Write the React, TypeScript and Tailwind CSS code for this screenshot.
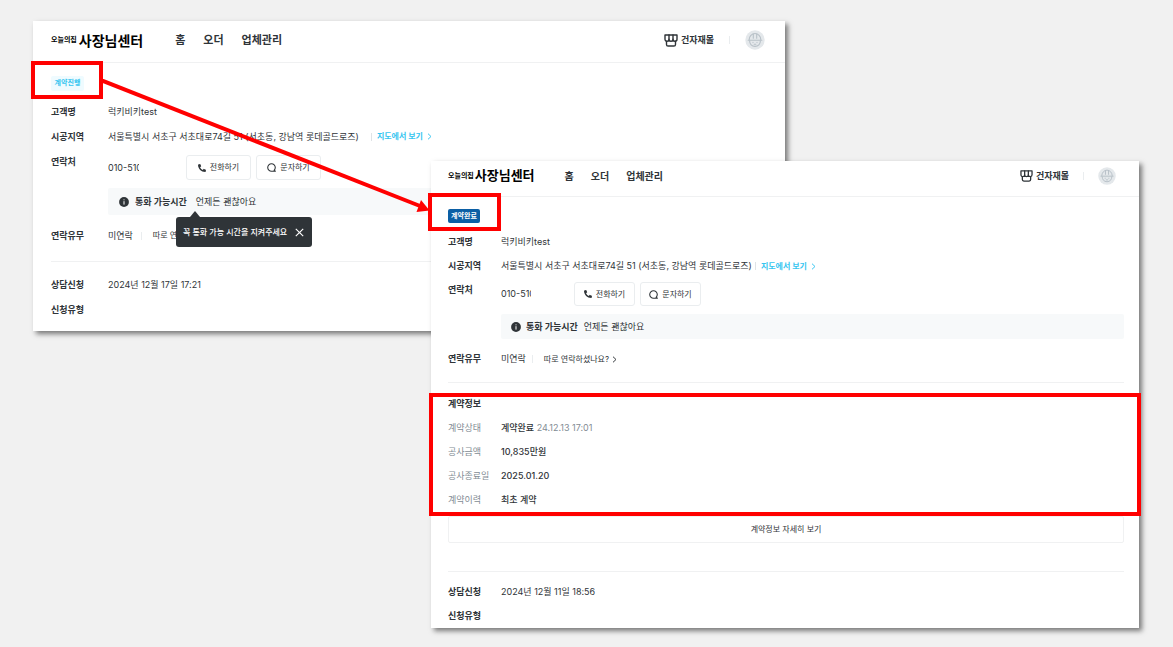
import React from "react";
import { FaPhoneAlt } from "react-icons/fa";

type Size = "large" | "small";

function StoreIcon({ className }: { className: string }) {
  return (
    <svg viewBox="0 0 14 13" className={className} fill="none" stroke="#2f3438" strokeWidth="1.4" strokeLinejoin="round" strokeLinecap="round" aria-hidden="true">
      <path d="M1 1h12v4.200c0 1.200-.8 2-2 2s-2-.8-2-2c0 1.200-.8 2-2 2s-2-.8-2-2c0 1.200-.8 2-2 2s-2-.8-2-2z" />
      <path d="M5 1v4.200M9 1v4.200M2.500 7.200v3.200c0 1 .6 1.600 1.600 1.600h5.800c1 0 1.600-.6 1.600-1.600V7.200" />
    </svg>
  );
}

function Avatar({ className }: { className: string }) {
  return (
    <svg viewBox="0 0 20 20" className={className} role="img" aria-label="프로필">
      <circle cx="10" cy="10" r="9.700" fill="#e4e8eb" />
      <g fill="none" stroke="#b8c1c8" strokeWidth="1.100" strokeLinecap="round">
        <path d="M4.200 9.500a5.800 6 0 0 1 11.600 0M3.200 10.200h13.600" />
        <path d="M8.300 4v4.200M11.700 4v4.200" />
        <path d="M4.600 10.800c0 3.200 2.200 5.600 5.400 5.600s5.400-2.400 5.400-5.600" />
        <path d="M8 12.400v.2M12 12.400v.2M9.200 14.300h1.600" />
      </g>
    </svg>
  );
}

function MessageIcon() {
  return (
    <svg viewBox="0 0 10 10" className="size-[9px]" fill="none" stroke="#2f3438" strokeWidth="1.200" strokeLinejoin="round" aria-hidden="true">
      <path d="M9.300 9.200H5A4.200 4.200 0 1 1 9.200 5c0 1.300-.5 2.300-1.300 3.100z" />
    </svg>
  );
}

function InfoIcon() {
  return (
    <svg viewBox="0 0 10 10" className="size-[10px]" aria-hidden="true">
      <circle cx="5" cy="5" r="4.900" fill="#2f3438" />
      <path d="M5 2.400v.9M5 4.200v3.400" stroke="#fff" strokeWidth="1" />
    </svg>
  );
}

function Chevron() {
  return (
    <svg viewBox="0 0 5 8" className="h-[7px] w-[5px]" fill="none" stroke="currentColor" strokeWidth="1.100" aria-hidden="true">
      <path d="M.8.8 4.200 4 .8 7.200" />
    </svg>
  );
}

function Header({ size }: { size: Size }) {
  const large = size === "large";
  return (
    <header
      className={`flex items-center whitespace-nowrap border-b border-[#f0f1f2] font-bold ${large ? "h-[42px] pb-[3px] pl-[18px] pr-5" : "h-9 pb-[5px] pl-[17px] pr-[23px]"}`}
    >
      <a href="#home" className={`flex items-center text-black ${large ? "gap-0.5" : "gap-px"}`}>
        <span className="text-[7px]">오늘의집</span>
        <span className={large ? "text-[14px]" : "text-[13px]"}>사장님센터</span>
      </a>
      <nav className={`flex ${large ? "ml-8 gap-[18px] text-[11px]" : "ml-[30px] gap-[17px] text-[10px]"}`}>
        <a href="#home">홈</a>
        <a href="#order">오더</a>
        <a href="#company">업체관리</a>
      </nav>
      <a href="#mall" className="ml-auto flex items-center gap-[3px] text-[9px]">
        <StoreIcon className={large ? "h-[13px] w-[14px]" : "h-3 w-[13px]"} />
        건자재몰
      </a>
      <span className={`h-2 w-px bg-[#eaedef] ${large ? "mx-[15px]" : "mx-[14px]"}`} />
      <Avatar className={large ? "size-5" : "size-[18px]"} />
    </header>
  );
}

function Row({ size, label, muted = false, children }: { size: Size; label: string; muted?: boolean; children?: React.ReactNode }) {
  return (
    <div className={size === "large" ? "grid grid-cols-[57px_1fr] leading-[25px]" : "grid grid-cols-[53px_1fr] leading-6"}>
      <dt className={muted ? "text-[#828c94]" : "font-bold"}>{label}</dt>
      <dd className="min-w-0">{children}</dd>
    </div>
  );
}

function CustomerRows({ size, tooltip }: { size: Size; tooltip?: React.ReactNode }) {
  const large = size === "large";
  const button = `flex items-center justify-center gap-1 rounded-[3px] border border-[#eaedef] bg-white text-[8px] ${large ? "h-[25px] w-[65px]" : "h-6 w-[61px]"}`;
  return (
    <dl className={large ? "mt-2" : "mt-[7px]"}>
      <Row size={size} label="고객명">럭키비키test</Row>
      <Row size={size} label="시공지역">
        <span className="flex items-center">
          서울특별시 서초구 서초대로74길 51 (서초동, 강남역 롯데골드로즈)
          <span className={`mr-[5px] h-2 w-px bg-[#dfe3e6] ${large ? "ml-3" : "ml-[3px]"}`} />
          <a href="#map" className="flex items-center gap-1 text-[8px] font-bold text-[#35c5f0]">
            지도에서 보기
            <Chevron />
          </a>
        </span>
      </Row>
      <Row size={size} label="연락처">
        <div className={large ? "pt-1.5" : "pt-1"}>
          <div className="flex items-center gap-[5px]">
            <span className={large ? "w-[73px]" : "w-[68px]"}>
              <span className={`block overflow-hidden ${large ? "w-[31px]" : "w-[30px]"}`}>010-510</span>
            </span>
            <button type="button" className={button}>
              <FaPhoneAlt className="size-2" />
              전화하기
            </button>
            <button type="button" className={button}>
              <MessageIcon />
              문자하기
            </button>
          </div>
          <div className={`relative mt-2 flex items-center rounded-[2px] bg-[#f7f9fa] ${large ? "h-[27px] pl-[11px]" : "h-[25px] pl-2.5"}`}>
            <InfoIcon />
            <b className={large ? "ml-1.5" : "ml-[5px]"}>통화 가능시간</b>
            <span className={large ? "ml-[9px]" : "ml-1.5"}>언제든 괜찮아요</span>
            {tooltip}
          </div>
        </div>
      </Row>
      <div className="mt-2">
        <Row size={size} label="연락유무">
          <span className="flex items-center">
            미연락
            <span className={`h-2 w-px bg-[#eaedef] ${large ? "ml-2 mr-[11px]" : "ml-1.5 mr-[11px]"}`} />
            <a href="#contact" className="flex items-center gap-[3px] text-[8px]">
              따로 연락하셨나요?
              <Chevron />
            </a>
          </span>
        </Row>
      </div>
    </dl>
  );
}

function CallTooltip() {
  return (
    <div role="tooltip" className="absolute left-[68px] top-[29px] flex h-[30px] w-[136px] items-center justify-between rounded-[3px] bg-[#2f3438] pl-[7px] pr-2 text-[8px] font-medium text-white">
      <svg viewBox="0 0 10 6" className="absolute -top-[6px] left-[14px] h-[6px] w-[10px]" aria-hidden="true">
        <path d="M5 0l5 6H0z" fill="#2f3438" />
      </svg>
      꼭 통화 가능 시간을 지켜주세요
      <button type="button" aria-label="닫기">
        <svg viewBox="0 0 8 8" className="size-[9px]" stroke="#fff" strokeWidth="1" aria-hidden="true">
          <path d="M.7.7l6.600 6.600M7.300.7L.7 7.300" />
        </svg>
      </button>
    </div>
  );
}

const panel = "relative col-start-1 row-start-1 self-start bg-white shadow-[3px_3px_5px_rgba(0,0,0,0.5)]";

function ProgressPanel() {
  return (
    <section className={`${panel} ml-[33px] mr-[388px] mt-[21px]`}>
      <Header size="large" />
      <div className="pb-[9px] pl-[18px] pr-[15px]">
        <div className="relative mt-[13px] w-fit">
          <span className="flex h-[15px] w-[33px] items-center justify-center rounded-[2px] bg-[#effbff] text-[7px] font-bold text-[#35c5f0]">
            계약진행
          </span>
          <span className="absolute -left-5 -top-[15px] h-[38px] w-[72px] border-4 border-[#ff0000]" />
        </div>
        <CustomerRows size="large" tooltip={<CallTooltip />} />
        <hr className="mt-[13px] border-[#f0f1f2]" />
        <dl className="mt-[10px]">
          <Row size="large" label="상담신청">2024년 12월 17일 17:21</Row>
          <Row size="large" label="신청유형" />
        </dl>
      </div>
    </section>
  );
}

function CompletePanel() {
  return (
    <section className={`${panel} mb-[19px] ml-[431px] mr-[34px] mt-[161px]`}>
      <Header size="small" />
      <div className="pl-[17px] pr-[15px]">
        <div className="relative mt-3 w-fit">
          <span className="flex h-[14px] w-8 items-center justify-center rounded-[2px] bg-[#0b5fa5] text-[7px] font-bold text-white">
            계약완료
          </span>
          <span className="absolute -left-5 -top-4 h-[38px] w-[73px] border-4 border-[#ff0000]" />
        </div>
        <CustomerRows size="small" />
        <hr className="mt-[11px] border-[#f0f1f2]" />
        <div className="relative mt-[9px]">
          <h2 className="font-bold leading-6">계약정보</h2>
          <dl>
            <Row size="small" label="계약상태" muted>
              <span className="font-medium">계약완료</span> <span className="text-[#828c94]">24.12.13 17:01</span>
            </Row>
            <Row size="small" label="공사금액" muted>
              <span className="font-medium">10,835만원</span>
            </Row>
            <Row size="small" label="공사종료일" muted>
              <span className="font-medium">2025.01.20</span>
            </Row>
            <Row size="small" label="계약이력" muted>
              <span className="font-medium">최초 계약</span>
            </Row>
          </dl>
          <span className="absolute -bottom-1 -left-[19px] -right-[17px] top-px border-4 border-[#ff0000]" />
        </div>
        <button type="button" className="mt-1 flex h-[27px] w-full items-center justify-center rounded-[2px] border border-[#f0f1f2] pb-0.5 text-[8px]">
          계약정보 자세히 보기
        </button>
        <hr className="mt-7 border-[#f0f1f2]" />
        <dl className="mt-2">
          <Row size="small" label="상담신청">2024년 12월 11일 18:56</Row>
          <Row size="small" label="신청유형" />
        </dl>
      </div>
    </section>
  );
}

export default function App() {
  return (
    <main className="relative grid min-h-screen overflow-hidden whitespace-nowrap bg-[#f1f1f1] font-['Inter','Noto_Sans_CJK_KR',sans-serif] text-[9px] text-[#2f3438]">
      <ProgressPanel />
      <CompletePanel />
      <svg viewBox="0 0 328 134" className="pointer-events-none absolute left-[102px] top-[79px] h-[134px] w-[328px]" aria-hidden="true">
        <path d="M0 1.500L318 127" stroke="#ff0000" strokeWidth="4" />
        <path d="M327.500 131.500L319 121l-4.500 12z" fill="#ff0000" />
      </svg>
    </main>
  );
}
